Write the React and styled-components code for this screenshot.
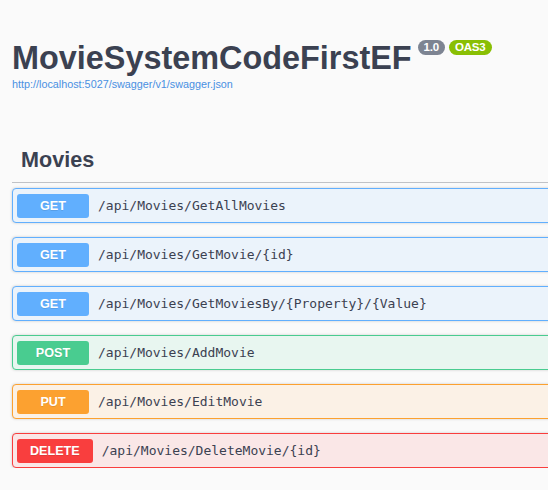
import React from "react"
import styled, { createGlobalStyle } from "styled-components"

const GlobalStyle = createGlobalStyle`
  html, body {
    margin: 0;
    padding: 0;
    background: #fafafa;
    overflow: hidden;
  }
  body {
    font-family: "Liberation Sans", Arial, sans-serif;
    color: #3b4151;
  }
`

const METHODS = {
  GET: { color: "#61affe", bg: "#ebf3fb" },
  POST: { color: "#49cc90", bg: "#e8f6f0" },
  PUT: { color: "#fca130", bg: "#fbf1e6" },
  DELETE: { color: "#f93e3e", bg: "#fae7e7" },
}

const operations = [
  { method: "GET", path: "/api/Movies/GetAllMovies" },
  { method: "GET", path: "/api/Movies/GetMovie/{id}" },
  { method: "GET", path: "/api/Movies/GetMoviesBy/{Property}/{Value}" },
  { method: "POST", path: "/api/Movies/AddMovie" },
  { method: "PUT", path: "/api/Movies/EditMovie" },
  { method: "DELETE", path: "/api/Movies/DeleteMovie/{id}" },
]

const App = () => {
  return (
    <Page>
      <GlobalStyle />
      <Info>
        <Title>
          MovieSystemCodeFirstEF
          <Versions>
            <Badge $bg="#7d8492">1.0</Badge>
            <Badge $bg="#89bf04">OAS3</Badge>
          </Versions>
        </Title>
        <SpecLink href="#">http://localhost:5027/swagger/v1/swagger.json</SpecLink>
      </Info>

      <TagSection>
        <TagHeading>Movies</TagHeading>
        <OpList>
          {operations.map((op) => (
            <OpBlock key={op.path} $method={op.method}>
              <Method $method={op.method}>{op.method}</Method>
              <Path>{op.path}</Path>
            </OpBlock>
          ))}
        </OpList>
      </TagSection>
    </Page>
  )
}

export default App

const Page = styled.div`
  width: 1100px;
  padding: 0 0 0 12px;
`
const Info = styled.div`
  padding: 40px 0 0 0;
`
const Title = styled.h2`
  margin: 0;
  font-size: 32.4px;
  font-weight: 700;
  color: #3b4151;
  line-height: 37px;
  display: flex;
  align-items: flex-start;
`
const Versions = styled.span`
  display: flex;
  gap: 4px;
  margin: 0 0 0 6px;
`
const Badge = styled.small`
  font-size: 11.5px;
  font-weight: 700;
  line-height: 15px;
  height: 15px;
  color: #fff;
  background: ${(p) => p.$bg};
  border-radius: 51px;
  padding: 0 6px;
  font-family: "Liberation Sans", Arial, sans-serif;
  letter-spacing: -0.2px;
`
const SpecLink = styled.a`
  display: block;
  font-size: 10.8px;
  color: #4990e2;
  text-decoration: none;
  margin-top: 1px;
`
const TagSection = styled.div`
  margin-top: 48px;
`
const TagHeading = styled.h3`
  margin: 0;
  padding: 9px 0 10px 9px;
  font-size: 21.6px;
  font-weight: 700;
  line-height: 25px;
  color: #3b4151;
  border-bottom: 1px solid rgba(59, 65, 81, 0.3);
`
const OpList = styled.div`
  padding-top: 5px;
  display: flex;
  flex-direction: column;
  gap: 14px;
`
const OpBlock = styled.div`
  display: flex;
  align-items: center;
  height: 33px;
  padding: 0 4px;
  border: 1px solid ${(p) => METHODS[p.$method].color};
  background: ${(p) => METHODS[p.$method].bg};
  border-radius: 4px;
  box-shadow: 0 0 3px rgba(0, 0, 0, 0.19);
`
const Method = styled.span`
  min-width: 72px;
  box-sizing: border-box;
  padding: 0 13px;
  height: 24px;
  line-height: 24px;
  text-align: center;
  font-size: 12.6px;
  font-weight: 700;
  color: #fff;
  background: ${(p) => METHODS[p.$method].color};
  border-radius: 3px;
  text-shadow: 0 1px 0 rgba(0, 0, 0, 0.1);
`
const Path = styled.span`
  padding: 0 9px;
  font-family: "DejaVu Sans Mono", Consolas, monospace;
  font-size: 13px;
  color: #3b4151;
`
